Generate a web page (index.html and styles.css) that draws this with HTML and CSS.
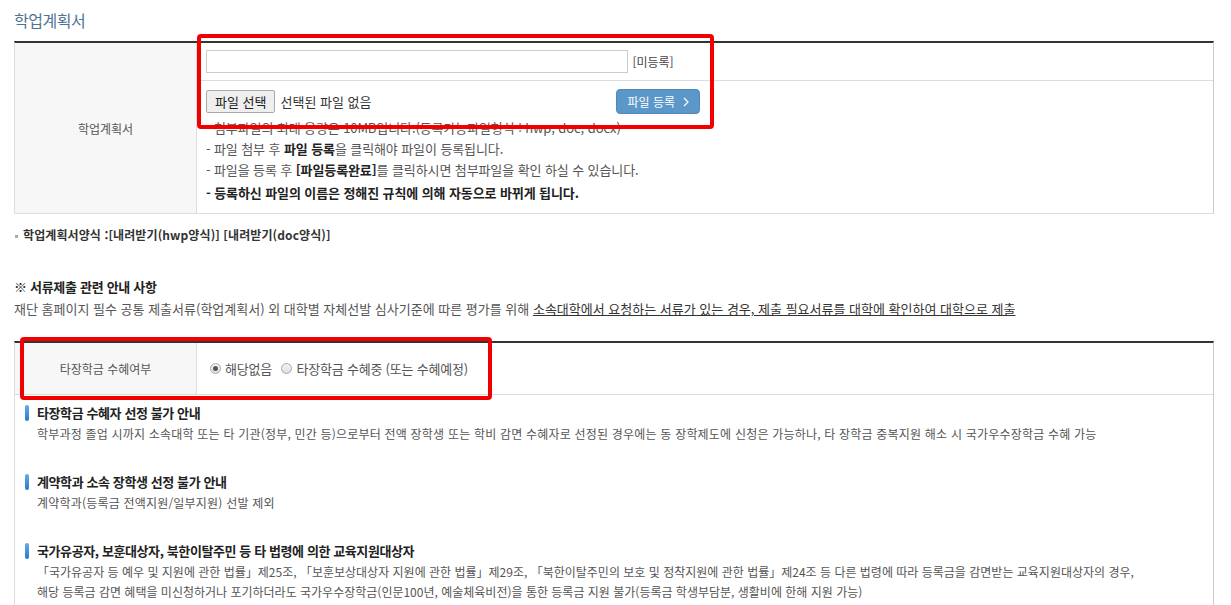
FILE: index.html
```
<!DOCTYPE html>
<html lang="ko">
<head>
  <meta charset="UTF-8">
  <title>학업계획서</title>
  <link rel="stylesheet" href="styles.css">
</head>
<body>
  <div class="wrap">
    <h2 class="sub-title">학업계획서</h2>

    <table class="form-table">
      <tr>
        <th rowspan="2">학업계획서</th>
        <td class="file-name">
          <input type="text" class="file-text" readonly>
          <span class="state">[미등록]</span>
        </td>
      </tr>
      <tr>
        <td class="file-box">
          <div class="file-row">
            <div class="file-pick">
              <button type="button" class="btn-pick">파일 선택</button>
              <span class="no-file">선택된 파일 없음</span>
            </div>
            <button type="button" class="btn-upload">파일 등록
              <svg width="6" height="10" viewBox="0 0 6 10"><polyline points="1,1 5,5 1,9" fill="none" stroke="#fff" stroke-width="1.2"/></svg>
            </button>
          </div>
          <ul class="notes">
            <li>- 첨부파일의 최대 용량은 10MB입니다.(등록가능파일형식 : hwp, doc, docx)</li>
            <li>- 파일 첨부 후 <b>파일 등록</b>을 클릭해야 파일이 등록됩니다.</li>
            <li>- 파일을 등록 후 <b>[파일등록완료]</b>를 클릭하시면 첨부파일을 확인 하실 수 있습니다.</li>
            <li class="strong">- 등록하신 파일의 이름은 정해진 규칙에 의해 자동으로 바뀌게 됩니다.</li>
          </ul>
        </td>
      </tr>
    </table>

    <p class="form-link">학업계획서양식 :[내려받기(hwp양식)] [내려받기(doc양식)]</p>

    <div class="notice">
      <h3>※ 서류제출 관련 안내 사항</h3>
      <p>재단 홈페이지 필수 공통 제출서류(학업계획서) 외 대학별 자체선발 심사기준에 따른 평가를 위해 <u>소속대학에서 요청하는 서류가 있는 경우, 제출 필요서류를 대학에 확인하여 대학으로 제출</u></p>
    </div>

    <table class="form-table radio-table">
      <tr>
        <th>타장학금 수혜여부</th>
        <td>
          <label class="radio"><input type="radio" name="other" checked> 해당없음</label>
          <label class="radio"><input type="radio" name="other"> 타장학금 수혜중 (또는 수혜예정)</label>
        </td>
      </tr>
    </table>

    <div class="info-box">
      <div class="info">
        <h4>타장학금 수혜자 선정 불가 안내</h4>
        <p>학부과정 졸업 시까지 소속대학 또는 타 기관(정부, 민간 등)으로부터 전액 장학생 또는 학비 감면 수혜자로 선정된 경우에는 동 장학제도에 신청은 가능하나, 타 장학금 중복지원 해소 시 국가우수장학금 수혜 가능</p>
      </div>
      <div class="info">
        <h4>계약학과 소속 장학생 선정 불가 안내</h4>
        <p>계약학과(등록금 전액지원/일부지원) 선발 제외</p>
      </div>
      <div class="info">
        <h4>국가유공자, 보훈대상자, 북한이탈주민 등 타 법령에 의한 교육지원대상자</h4>
        <p class="law">「국가유공자 등 예우 및 지원에 관한 법률」제25조, 「보훈보상대상자 지원에 관한 법률」제29조, 「북한이탈주민의 보호 및 정착지원에 관한 법률」제24조 등 다른 법령에 따라 등록금을 감면받는 교육지원대상자의 경우,<br>해당 등록금 감면 혜택을 미신청하거나 포기하더라도 국가우수장학금(인문100년, 예술체육비전)을 통한 등록금 지원 불가(등록금 학생부담분, 생활비에 한해 지원 가능)</p>
      </div>
    </div>

    <!-- red review marks -->
    <div class="mark mark-file"></div>
    <div class="mark mark-radio"></div>
  </div>
</body>
</html>
```

FILE: styles.css
```
body {
  margin: 0;
  font-family: "Noto Sans CJK KR", "Noto Sans", sans-serif;
  font-size: 12px;
  color: #555;
  background: #fff;
}
.wrap {
  position: relative;
  width: 1200px;
  margin-left: 14px;
}
.sub-title {
  margin: 0 0 11px;
  padding-top: 10px;
  font-size: 16px;
  line-height: 20px;
  font-weight: normal;
  color: #4f7394;
  letter-spacing: -0.5px;
}
.form-table {
  width: 100%;
  border-collapse: separate;
  border-spacing: 0;
  border-top: 2px solid #333;
  border-left: 1px solid #ddd;
  border-right: 1px solid #ccc;
}
.form-table th {
  width: 179px;
  background: #f7f7f7;
  font-weight: normal;
  color: #555;
  border-right: 1px solid #ddd;
  border-bottom: 1px solid #ddd;
}
.form-table td {
  border-bottom: 1px solid #ddd;
  text-align: left;
}
.file-name {
  height: 24px;
  padding: 6px 9px 7px;
}
.file-text {
  width: 422px;
  height: 23px;
  box-sizing: border-box;
  border: 1px solid #ccc;
  padding: 0 4px;
  vertical-align: middle;
}
.state {
  margin-left: 1px;
  color: #444;
  vertical-align: middle;
}
.file-box {
  padding: 8px 9px 10px;
}
.file-row {
  width: 494px;
  display: flex;
  justify-content: space-between;
  align-items: center;
}
.file-pick {
  display: flex;
  align-items: center;
  gap: 5px;
  font-size: 13px;
  color: #333;
}
.btn-pick {
  height: 23px;
  padding: 0 8px;
  font-family: inherit;
  font-size: 13px;
  color: #222;
  background: #efefef;
  border: 1px solid #a9a9a9;
  border-radius: 2px;
}
.btn-upload {
  display: flex;
  align-items: center;
  gap: 8px;
  height: 25px;
  padding: 0 10px;
  font-family: inherit;
  font-size: 12px;
  color: #fff;
  background: #5b97c8;
  border: 1px solid #4f89ba;
  border-radius: 4px;
}
.notes {
  list-style: none;
  margin: 3px 0 0;
  padding: 0;
  font-size: 13px;
  letter-spacing: -0.1px;
}
.notes li {
  line-height: 21px;
}
.notes b {
  color: #222;
}
.notes .strong {
  margin-top: 2px;
  font-weight: bold;
  color: #222;
}
.form-link {
  margin: 11px 0 0;
  padding-left: 9px;
  position: relative;
  line-height: 20px;
  font-weight: bold;
  color: #333;
  letter-spacing: 0.1px;
}
.form-link::before {
  content: "";
  position: absolute;
  left: 1px;
  top: 10px;
  width: 3px;
  height: 3px;
  background: #aaa;
}
.notice {
  margin-top: 32px;
  font-size: 13px;
}
.notice h3 {
  margin: 0 0 2px;
  font-size: 13px;
  line-height: 20px;
  letter-spacing: -0.3px;
  color: #222;
}
.notice p {
  margin: 0;
  line-height: 20px;
}
.notice u {
  color: #333;
}
.radio-table {
  margin-top: 22px;
}
.radio-table th {
  height: 49px;
}
.radio-table td {
  padding: 0 13px;
}
.radio {
  display: inline-flex;
  align-items: center;
  gap: 4px;
  margin-right: 6px;
  font-size: 13px;
  letter-spacing: -0.2px;
  color: #555;
}
.radio input {
  appearance: none;
  margin: 0;
  width: 11px;
  height: 11px;
  border: 1px solid #a7a7a7;
  border-radius: 50%;
  background: linear-gradient(#f4f4f4, #dedede);
  position: relative;
}
.radio input:checked::after {
  content: "";
  position: absolute;
  left: 2px;
  top: 2px;
  width: 5px;
  height: 5px;
  border-radius: 50%;
  background: #555;
}
.info-box {
  border-left: 1px solid #ddd;
  border-right: 1px solid #ccc;
  padding: 8px 0 20px 10px;
}
.info {
  margin-bottom: 28px;
}
.info h4 {
  display: flex;
  align-items: center;
  margin: 0;
  font-size: 13px;
  line-height: 20px;
  letter-spacing: -0.4px;
  color: #222;
}
.info h4::before {
  content: "";
  width: 4px;
  height: 16px;
  margin-right: 8px;
  border-radius: 2px;
  background: linear-gradient(#64adec, #2a78c8);
}
.info p {
  margin: 1px 0 0;
  padding-left: 12px;
  line-height: 20px;
  letter-spacing: 0.2px;
}
.info .law {
  letter-spacing: 0;
}
.mark {
  position: absolute;
  box-sizing: border-box;
  border: 4px solid #f20000;
  border-radius: 4px;
}
.mark-file {
  left: 183px;
  top: 34px;
  width: 517px;
  height: 95px;
}
.mark-radio {
  left: 6px;
  top: 337px;
  width: 472px;
  height: 63px;
}
```
